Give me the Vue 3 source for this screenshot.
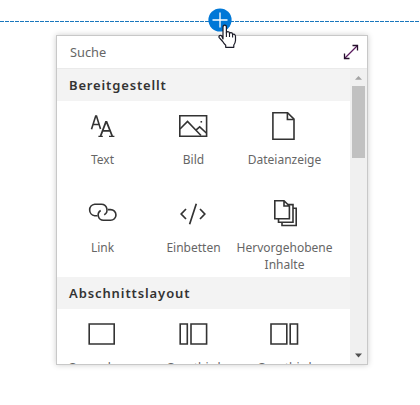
<script setup>
const webparts = [
  { label: 'Text', icon: 'text' },
  { label: 'Bild', icon: 'image' },
  { label: 'Dateianzeige', icon: 'file' },
  { label: 'Link', icon: 'link' },
  { label: 'Einbetten', icon: 'embed' },
  { label: 'Hervorgehobene Inhalte', icon: 'files' },
]
const layouts = [
  { label: 'One column', icon: 'one' },
  { label: 'One-third left', icon: 'left' },
  { label: 'One-third right', icon: 'right' },
]
</script>

<template>
  <div class="canvas">
    <svg class="divider" width="420" height="1" viewBox="0 0 420 1" shape-rendering="crispEdges">
      <path d="M0 .5H420" stroke="#1a77bd" stroke-dasharray="4 1" />
    </svg>
    <button class="add" aria-label="Hinzufügen">
      <svg width="24" height="24" viewBox="0 0 24 24">
        <circle cx="12" cy="12" r="11.6" fill="#0078d7" />
        <path d="M12 4.5V19.5M4.5 12H19.5" stroke="#fff" stroke-width="1.35" />
      </svg>
    </button>

    <section class="panel">
      <div class="search">
        <span>Suche</span>
        <svg class="expand" width="16" height="16" viewBox="0 0 16 16">
          <path d="M1.5 14.5L14.5 1.5" stroke="#5a1a5e" stroke-width="1.2" />
          <path d="M9.5 1.5H14.5V6.5M1.5 9.5V14.5H6.5" fill="none" stroke="#24102b" stroke-width="1.3" />
        </svg>
      </div>
      <div class="body">
        <div class="content">
          <h2>Bereitgestellt</h2>
          <div class="grid">
            <div v-for="item in webparts" :key="item.icon" class="tile">
              <svg class="icon" width="32" height="32" viewBox="0 0 32 32" fill="none" stroke="#333" stroke-width="1.6">
                <g v-if="item.icon === 'text'">
                  <path d="M5.5 19.3L9.7 6H10.5L14.5 19M7 14.5H13" />
                  <path d="M14.6 26L19.9 12H20.6L26.2 26M16.6 20.8H24.2" stroke-width="1.8" />
                  <path d="M12.4 26.3H16.8M23 26.3H28.4" stroke-width="1.3" />
                </g>
                <g v-else-if="item.icon === 'image'">
                  <path d="M2.8 5.7H29.6V26.3H2.8Z" />
                  <path d="M3 19L10.5 11.5L24 25.5M18.6 20.3L22.7 16.8L29.3 23" />
                  <path d="M23.5 11H25.1V12.6H23.5Z" fill="#333" stroke="none" />
                </g>
                <g v-else-if="item.icon === 'file'">
                  <path d="M4.9 2.7H19.6L26 9.2V29.2H4.9Z" />
                  <path d="M19.4 3V9.5H25.7" />
                </g>
                <g v-else-if="item.icon === 'link'">
                  <path d="M11.5 17.7H8.7A5.8 5.8 0 0 1 8.7 6.2H15.4A5.7 5.7 0 0 1 18.2 16.8" />
                  <path d="M22 11.6H24.6A5.3 5.3 0 0 1 24.6 22.3H17.4A5.3 5.3 0 0 1 14.7 12.5" />
                </g>
                <g v-else-if="item.icon === 'embed'" stroke-width="1.7">
                  <path d="M9 11L4.2 16L9 21M23 11L27.8 16L23 21M19.3 5.8L12.6 26.2" />
                </g>
                <g v-else>
                  <path d="M6.8 2.7H16L21.4 8V20.7H6.8ZM16 3V8H21" />
                  <path d="M10.5 21V24.2H25V6.6H20M14 24.6V27.5H28.2V10.2H25" />
                </g>
              </svg>
              <span class="label">{{ item.label }}</span>
            </div>
          </div>
          <h2 class="second">Abschnittslayout</h2>
          <div class="grid layouts">
            <div v-for="item in layouts" :key="item.icon" class="tile">
              <svg class="icon" width="32" height="32" viewBox="0 0 32 32" fill="none" stroke="#333" stroke-width="1.6">
                <path v-if="item.icon === 'one'" d="M3.2 6H28.2V26H3.2Z" />
                <path v-else-if="item.icon === 'left'" d="M3.2 6H10.3V26H3.2ZM14 6H29.6V26H14Z" />
                <path v-else d="M3 6H18.8V26H3ZM22.2 6H29.5V26H22.2Z" />
              </svg>
              <span class="label">{{ item.label }}</span>
            </div>
          </div>
        </div>
        <div class="scrollbar">
          <svg width="17" height="17" viewBox="0 0 17 17"><path d="M8.5 7L12 10.8H5Z" fill="#a3a3a3" /></svg>
          <div class="thumb"></div>
          <svg class="down" width="17" height="17" viewBox="0 0 17 17"><path d="M5 6.5H12L8.5 10.5Z" fill="#505050" /></svg>
        </div>
      </div>
    </section>

    <svg class="cursor" width="20" height="26" viewBox="0 0 20 26">
      <path d="M5 15V3.2Q5 1.2 6.7 1.2T8.4 3.2V9Q8.7 7.5 10.1 7.7Q11.5 7.8 11.5 9.5Q12 8.3 13.3 8.7Q14.6 9 14.6 10.7Q15.3 9.8 16.5 10.4Q17.5 11 17.5 12.5V16.5Q17.3 19 15.8 21V23.3H7.7V21.2Q5.8 19.5 4.7 17.5L1.2 13.6Q.5 12.4 1.7 11.5Q2.8 10.9 3.8 12Z" fill="#fff" stroke="#1b1b28" stroke-width="1.2" stroke-linejoin="round" />
      <path d="M8.4 8.5V13M11.5 9V13M14.6 10.5V13.5" stroke="#1b1b28" stroke-width="1.1" />
    </svg>
  </div>
</template>

<style>
body { background: #fff; }
</style>
<style scoped>
.canvas { position: relative; width: 420px; height: 405px; overflow: hidden; box-sizing: border-box; padding: 35px 0 0 56px; background: #fff; font-family: "Noto Sans", "Open Sans", sans-serif; }
.divider { position: absolute; left: 0; top: 21px; }
.add { position: absolute; left: 208px; top: 8px; width: 24px; height: 24px; padding: 0; border: 0; background: none; }
.add svg { display: block; }
.cursor { position: absolute; left: 218px; top: 24px; }
.panel { box-sizing: border-box; width: 312px; height: 330px; border: 1px solid #c8c8c8; background: #fff; box-shadow: 0 0 6px rgba(0, 0, 0, .2); display: flex; flex-direction: column; }
.search { box-sizing: border-box; height: 33px; flex: none; border-bottom: 1px solid #eaeaea; display: flex; justify-content: space-between; align-items: center; padding: 0 8px 0 13px; font-size: 12.8px; color: #666; }
.expand { display: block; }
.body { flex: 1; min-height: 0; display: flex; }
.content { width: 293px; overflow: hidden; }
h2 { margin: 0; height: 32px; box-sizing: border-box; padding-left: 12px; background: #f3f3f3; font-size: 13px; line-height: 32px; font-weight: 600; letter-spacing: .85px; color: #333; }
.second { letter-spacing: .9px; }
.grid { display: grid; grid-template-columns: repeat(3, 91px); grid-auto-rows: 88px; }
.tile { display: flex; flex-direction: column; align-items: center; padding-top: 9px; }
.icon { display: block; flex: none; margin-right: 1px; }
.label { width: 104px; margin-top: 9px; text-align: center; font-size: 12px; line-height: 17px; color: #666; }
.layouts .label { width: 74px; }
.scrollbar { flex: 1; background: #f0f0f0; display: flex; flex-direction: column; align-items: center; }
.scrollbar svg { display: block; flex: none; }
.thumb { width: 13px; height: 72px; background: #c1c1c1; }
.down { margin-top: auto; }
</style>
